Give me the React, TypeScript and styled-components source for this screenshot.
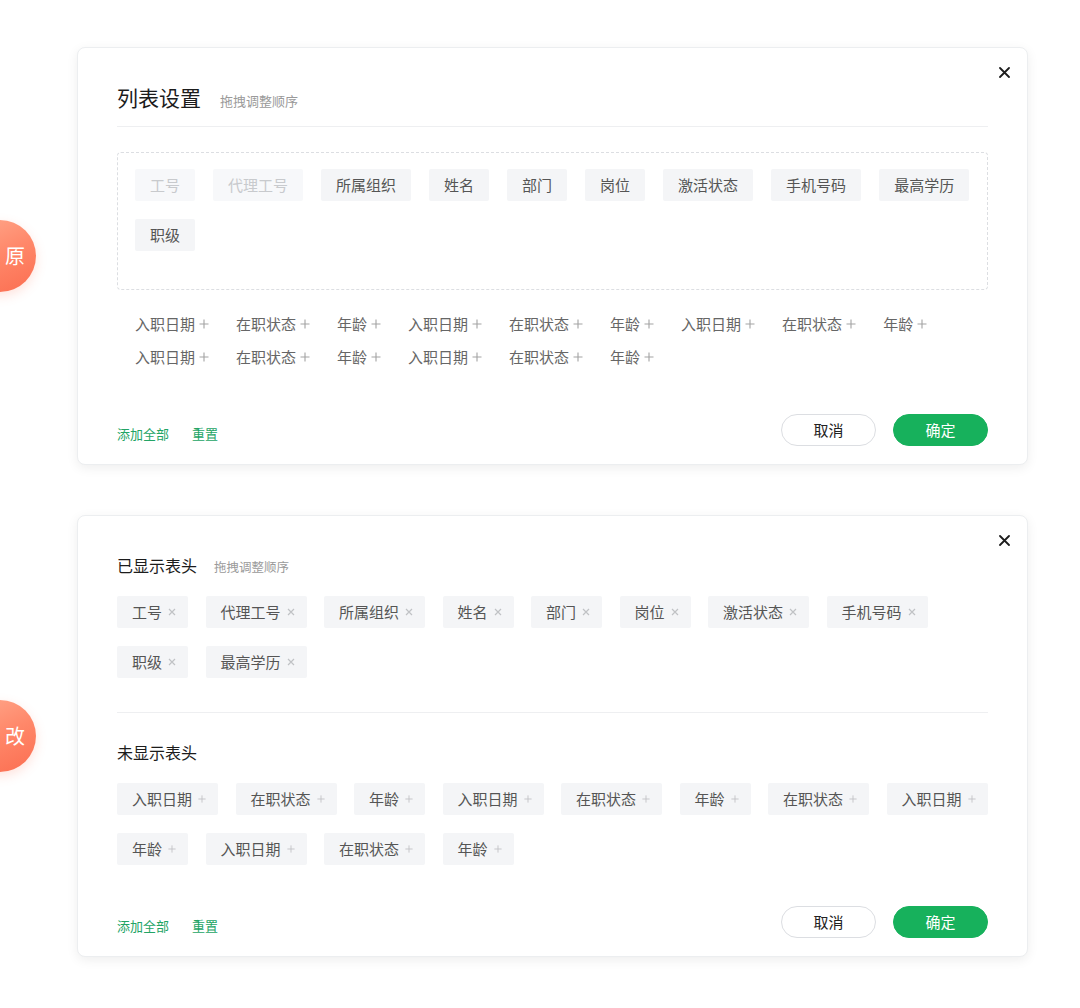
import React from 'react';
import styled, { createGlobalStyle } from 'styled-components';

const GlobalStyle = createGlobalStyle`
  html, body {
    margin: 0;
    padding: 0;
    background: #fff;
  }
  body {
    font-family: "Noto Sans CJK SC", "Noto Sans", sans-serif;
    color: #222;
  }
  * {
    box-sizing: border-box;
  }
`;

const Page = styled.div`
  width: 1080px;
  min-height: 1008px;
  padding-top: 47px;
  display: flex;
  flex-direction: column;
  gap: 50px;
  overflow: hidden;
`;

const Section = styled.div`
  position: relative;
  padding-left: 77px;
`;

const Badge = styled.div`
  position: absolute;
  left: -36px;
  top: 50%;
  margin-top: -36px;
  width: 72px;
  height: 72px;
  border-radius: 50%;
  background: linear-gradient(155deg, #ffa98d 0%, #ff8769 50%, #fb6e51 100%);
  box-shadow: 0 4px 12px rgba(255, 110, 80, 0.2);
  color: #fff;
  font-size: 20px;
  line-height: 72px;
  display: flex;
  justify-content: flex-end;
  padding-right: 11px;
`;

const Card = styled.div<{ $top: number }>`
  position: relative;
  width: 951px;
  background: #fff;
  border: 1px solid #eceef0;
  border-radius: 8px;
  box-shadow: 0 3px 12px rgba(0, 0, 0, 0.07);
  padding: ${(p) => p.$top}px 39px 18px;
  display: flex;
  flex-direction: column;
`;

const CloseButton = styled.button`
  position: absolute;
  top: 12px;
  right: 11px;
  width: 24px;
  height: 24px;
  padding: 0;
  border: none;
  background: transparent;
  display: flex;
  align-items: center;
  justify-content: center;
  cursor: pointer;
`;

const Header = styled.div<{ $divided?: boolean }>`
  display: flex;
  align-items: baseline;
  padding-bottom: ${(p) => (p.$divided ? '15px' : '0')};
  border-bottom: ${(p) => (p.$divided ? '1px solid #eeeff1' : 'none')};
`;

const Title = styled.div<{ $size: number }>`
  font-size: ${(p) => p.$size}px;
  line-height: ${(p) => (p.$size > 18 ? 28 : 24)}px;
  color: #1c1c1c;
`;

const Hint = styled.span<{ $size: number; $gap: number }>`
  margin-left: ${(p) => p.$gap}px;
  font-size: ${(p) => p.$size}px;
  color: #9a9a9a;
`;

const DropZone = styled.div`
  margin-top: 25px;
  height: 138px;
  border: 1px dashed #dcdee2;
  border-radius: 4px;
  padding: 16px 17px;
`;

const TagWrap = styled.div<{ $col: number; $top?: number }>`
  display: flex;
  flex-wrap: wrap;
  column-gap: ${(p) => p.$col}px;
  row-gap: 18px;
  margin-top: ${(p) => p.$top ?? 0}px;
`;

const Tag = styled.div<{ $disabled?: boolean; $icon?: boolean }>`
  height: 32px;
  display: inline-flex;
  align-items: center;
  gap: 6px;
  padding: ${(p) => (p.$icon ? '0 12px 0 15px' : '0 15px')};
  border-radius: 2px;
  background: ${(p) => (p.$disabled ? '#f7f8fa' : '#f4f5f7')};
  color: ${(p) => (p.$disabled ? '#c8cacd' : '#555')};
  font-size: 15px;
  line-height: 32px;
  white-space: nowrap;
`;

const OptionList = styled.div`
  margin-top: 17px;
  padding-left: 18px;
  display: flex;
  flex-wrap: wrap;
  column-gap: 27px;
`;

const Option = styled.div`
  display: inline-flex;
  align-items: center;
  gap: 4px;
  font-size: 15px;
  line-height: 33px;
  color: #666;
  white-space: nowrap;
`;

const Divider = styled.div`
  height: 1px;
  background: #eeeff1;
  margin: 34px 0 27px;
`;

const Footer = styled.div`
  margin-top: 41px;
  display: flex;
  justify-content: space-between;
  align-items: flex-end;
`;

const Links = styled.div`
  display: flex;
  gap: 23px;
  padding-bottom: 2px;
`;

const TextLink = styled.span`
  font-size: 13px;
  line-height: 20px;
  color: #23a465;
  cursor: pointer;
`;

const Actions = styled.div`
  display: flex;
  gap: 17px;
`;

const PillButton = styled.button<{ $primary?: boolean }>`
  width: 95px;
  height: 32px;
  border-radius: 16px;
  border: 1px solid ${(p) => (p.$primary ? '#17b15c' : '#dcdee2')};
  background: ${(p) => (p.$primary ? '#17b15c' : '#fff')};
  color: ${(p) => (p.$primary ? '#fff' : '#222')};
  font-family: inherit;
  font-size: 15px;
  line-height: 30px;
  padding: 0;
  cursor: pointer;
`;

const CloseIcon = () => (
  <svg width="11" height="11" viewBox="0 0 11 11">
    <path d="M1 1 L10 10 M10 1 L1 10" stroke="#1d1d1d" strokeWidth="1.8" strokeLinecap="round" />
  </svg>
);

const Cross = () => (
  <svg width="8" height="8" viewBox="0 0 8 8">
    <path d="M1 1 L7 7 M7 1 L1 7" stroke="#c0c2c5" strokeWidth="1.2" />
  </svg>
);

const Plus = ({ size = 8, color = '#c0c2c5' }: { size?: number; color?: string }) => (
  <svg width={size} height={size} viewBox="0 0 10 10">
    <path d="M5 0.5 V9.5 M0.5 5 H9.5" stroke={color} strokeWidth="1.1" />
  </svg>
);

const oldColumns = ['工号', '代理工号', '所属组织', '姓名', '部门', '岗位', '激活状态', '手机号码', '最高学历', '职级'];
const shownColumns = ['工号', '代理工号', '所属组织', '姓名', '部门', '岗位', '激活状态', '手机号码', '职级', '最高学历'];
const oldHidden = Array.from({ length: 15 }, (_, i) => ['入职日期', '在职状态', '年龄'][i % 3]);
const hiddenColumns = [
  '入职日期', '在职状态', '年龄', '入职日期', '在职状态', '年龄', '在职状态', '入职日期',
  '年龄', '入职日期', '在职状态', '年龄',
];

const Footbar = () => (
  <Footer>
    <Links>
      <TextLink>添加全部</TextLink>
      <TextLink>重置</TextLink>
    </Links>
    <Actions>
      <PillButton>取消</PillButton>
      <PillButton $primary>确定</PillButton>
    </Actions>
  </Footer>
);

const App = () => {
  return (
    <>
      <GlobalStyle />
      <Page>
        <Section>
          <Badge>原</Badge>
          <Card $top={35}>
            <CloseButton><CloseIcon /></CloseButton>
            <Header $divided>
              <Title $size={21}>列表设置</Title>
              <Hint $size={13} $gap={19}>拖拽调整顺序</Hint>
            </Header>
            <DropZone>
              <TagWrap $col={18}>
                {oldColumns.map((name, i) => (
                  <Tag key={i} $disabled={i < 2}>{name}</Tag>
                ))}
              </TagWrap>
            </DropZone>
            <OptionList>
              {oldHidden.map((name, i) => (
                <Option key={i}>
                  {name}
                  <Plus size={10} color="#a3a3a3" />
                </Option>
              ))}
            </OptionList>
            <Footbar />
          </Card>
        </Section>

        <Section>
          <Badge>改</Badge>
          <Card $top={37}>
            <CloseButton><CloseIcon /></CloseButton>
            <Header>
              <Title $size={16}>已显示表头</Title>
              <Hint $size={12.5} $gap={17}>拖拽调整顺序</Hint>
            </Header>
            <TagWrap $col={17.5} $top={19}>
              {shownColumns.map((name, i) => (
                <Tag key={i} $icon>
                  {name}
                  <Cross />
                </Tag>
              ))}
            </TagWrap>
            <Divider />
            <Header>
              <Title $size={16}>未显示表头</Title>
            </Header>
            <TagWrap $col={17.5} $top={19}>
              {hiddenColumns.map((name, i) => (
                <Tag key={i} $icon>
                  {name}
                  <Plus />
                </Tag>
              ))}
            </TagWrap>
            <Footbar />
          </Card>
        </Section>
      </Page>
    </>
  );
};

export default App;
